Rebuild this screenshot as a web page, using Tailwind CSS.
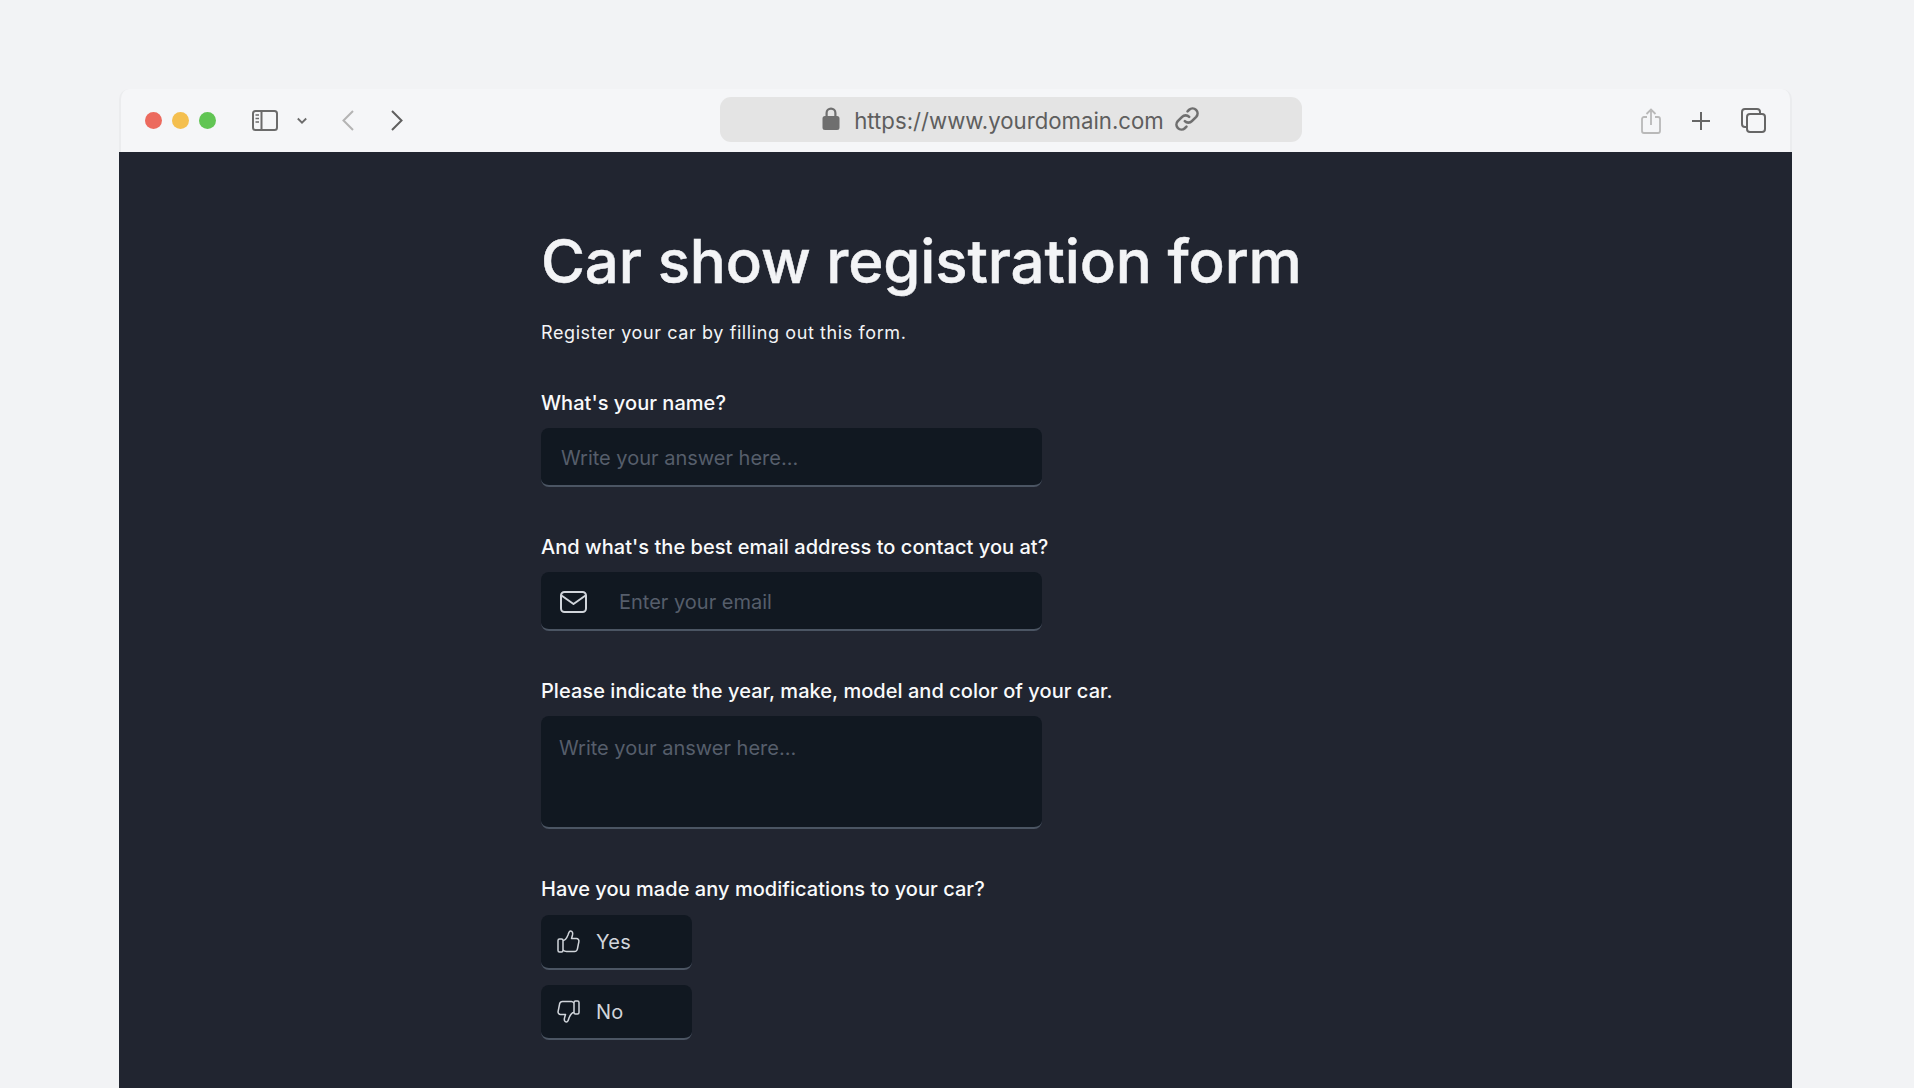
<!DOCTYPE html>
<html lang="en">
<head>
    <meta charset="UTF-8">
    <title>Car show registration form</title>
    <script src="https://cdn.jsdelivr.net/npm/@tailwindcss/browser@4"></script>
</head>
<body class="h-[1088px] overflow-hidden bg-[#f2f3f5] font-['Inter',sans-serif]">
    <div class="pt-[89px] pl-[119px] w-[1792px] h-[1088px] flex flex-col">
        <!-- Browser toolbar -->
        <div class="h-[63px] shrink-0 bg-[#f5f6f8] border-x-2 border-[#ebecee] rounded-t-[10px] flex items-center relative">
            <div class="flex items-center gap-[10px] ml-[24px]">
                <span class="w-[17px] h-[17px] rounded-full bg-[#ec6a5e]"></span>
                <span class="w-[17px] h-[17px] rounded-full bg-[#f4bf4f]"></span>
                <span class="w-[17px] h-[17px] rounded-full bg-[#61c554]"></span>
            </div>
            <svg class="ml-[36px]" width="26" height="21" viewBox="0 0 26 21" fill="none" stroke="#6b6b6b" stroke-width="2">
                <rect x="1" y="1" width="24" height="19" rx="2.5"/>
                <path d="M9.500 1v19"/>
                <path d="M3.500 5h3.500M3.500 8.500h3.500M3.500 12h3.500" stroke-width="1.600"/>
            </svg>
            <svg class="ml-[19px]" width="10" height="8" viewBox="0 0 10 8" fill="none" stroke="#6b6b6b" stroke-width="1.800">
                <path d="M.8 1.500l4.200 4.200 4.200-4.200"/>
            </svg>
            <svg class="ml-[35px]" width="12" height="21" viewBox="0 0 12 21" fill="none" stroke="#b4b4b4" stroke-width="2">
                <path d="M11 1L1.500 10.500 11 20"/>
            </svg>
            <svg class="ml-[37px]" width="12" height="21" viewBox="0 0 12 21" fill="none" stroke="#5f5f5f" stroke-width="2">
                <path d="M1 1l9.500 9.500L1 20"/>
            </svg>
            <!-- Address bar -->
            <div class="absolute left-[599px] top-[8px] w-[582px] h-[45px] rounded-[11px] bg-[#e4e4e4] flex items-center justify-center text-[#5e5e5e] text-[22.2px] pt-[3px]">
                <svg class="mr-[14px] mb-[6px]" width="18" height="23" viewBox="0 0 17 23" fill="#6f6f6f">
                    <path fill-rule="evenodd" d="M3 9V6a5.500 5.500 0 0 1 11 0v3h.5A2.500 2.500 0 0 1 17 11.500v9a2.500 2.500 0 0 1-2.500 2.500h-12A2.500 2.500 0 0 1 0 20.500v-9A2.500 2.500 0 0 1 2.500 9zm2.200 0h6.600V6a3.300 3.300 0 0 0-6.600 0z"/>
                </svg>
                <span>https://www.yourdomain.com</span>
                <svg class="ml-[10px] mb-[4px]" width="26" height="26" viewBox="0 0 24 24" fill="none" stroke="#6f6f6f" stroke-width="2.400" stroke-linecap="round">
                    <path d="M10 14a4.500 4.500 0 0 0 6.500 0l4-4a4.600 4.600 0 0 0-6.500-6.500l-1.500 1.500"/>
                    <path d="M14 10a4.500 4.500 0 0 0-6.500 0l-4 4a4.600 4.600 0 0 0 6.500 6.500l1.500-1.500"/>
                </svg>
            </div>
            <!-- Right icons -->
            <div class="ml-auto flex items-center mr-[24px]">
                <svg width="20" height="26" viewBox="0 0 20 26" fill="none" stroke="#b9b9b9" stroke-width="1.800">
                    <path d="M6 9H3a2 2 0 0 0-2 2v12a2 2 0 0 0 2 2h14a2 2 0 0 0 2-2V11a2 2 0 0 0-2-2h-3"/>
                    <path d="M10 17V2M5.500 6L10 1.500 14.500 6"/>
                </svg>
                <svg class="ml-[30px]" width="20" height="20" viewBox="0 0 20 20" fill="none" stroke="#666" stroke-width="2">
                    <path d="M10 1v18M1 10h18"/>
                </svg>
                <svg class="ml-[30px]" width="25" height="25" viewBox="0 0 25 25" fill="none" stroke="#666" stroke-width="2">
                    <path d="M5 19H4a3 3 0 0 1-3-3V4a3 3 0 0 1 3-3h12a3 3 0 0 1 3 3v2"/>
                    <rect x="6" y="6" width="18" height="18" rx="3"/>
                </svg>
            </div>
        </div>

        <!-- Form page -->
        <div class="flex-1 bg-[#212530] pl-[422px]">
            <h1 class="mt-[65px] text-[60px] leading-[88px] font-medium text-[#f3f4f6] tracking-[-0.15px] [-webkit-text-stroke:0.5px_#f3f4f6]">Car show registration form</h1>
            <p class="mt-[14px] text-[18px] leading-[28px] text-[#f3f4f6] tracking-[0.6px]">Register your car by filling out this form.</p>

            <label class="block mt-[42px] text-[20px] leading-[28px] font-medium text-[#f9fafb] tracking-[0.04px]">What's your name?</label>
            <div class="mt-[11px] w-[501px] h-[59px] rounded-[8px] bg-[#111821] border-b-2 border-[#4b5563] flex items-center pl-[20px] pt-[2px] text-[20px] text-[#565e6b]">Write your answer here...</div>

            <label class="block mt-[46px] text-[20px] leading-[28px] font-medium text-[#f9fafb] tracking-[0.04px]">And what's the best email address to contact you at?</label>
            <div class="mt-[11px] w-[501px] h-[59px] rounded-[8px] bg-[#111821] border-b-2 border-[#4b5563] flex items-center pl-[19px] pt-[2px] text-[20px] text-[#565e6b]">
                <svg width="27" height="22" viewBox="0 0 27 22" fill="none" stroke="#d1d5db" stroke-width="2" stroke-linejoin="round">
                    <rect x="1" y="1" width="25" height="20" rx="3.500"/>
                    <path d="M1.500 4.500L13.500 13 25.500 4.500"/>
                </svg>
                <span class="ml-[32px]">Enter your email</span>
            </div>

            <label class="block mt-[46px] text-[20px] leading-[28px] font-medium text-[#f9fafb] tracking-[0.04px]">Please indicate the year, make, model and color of your car.</label>
            <div class="mt-[11px] w-[501px] h-[113px] rounded-[8px] bg-[#111821] border-b-2 border-[#4b5563] pl-[18px] pt-[18px] text-[20px] leading-[28px] text-[#565e6b]">Write your answer here...</div>

            <label class="block mt-[46px] text-[20px] leading-[28px] font-medium text-[#f9fafb] tracking-[0.04px]">Have you made any modifications to your car?</label>
            <div class="mt-[12px] flex flex-col gap-[15px]">
                <div class="w-[151px] h-[55px] rounded-[8px] bg-[#111821] border-b-2 border-[#4b5563] flex items-center pl-[16px] text-[20px] text-[#d1d5db] tracking-[0.3px]">
                    <svg width="23" height="23" viewBox="0 0 23 23" fill="none" stroke="#d1d5db" stroke-width="1.500" stroke-linejoin="round">
                        <rect x="1" y="9" width="5" height="13" rx="1.500"/>
                        <path d="M6 10.500c2 0 4-3 5-5.500.5-1.500 1-4 2.500-4 2 0 2.500 2 2 4l-1 3.500h5a2.500 2.500 0 0 1 2.400 3l-1.500 7.500a3 3 0 0 1-3 2.500H9.500C8 21.500 7 21 6 20"/>
                    </svg>
                    <span class="ml-[16px]">Yes</span>
                </div>
                <div class="w-[151px] h-[55px] rounded-[8px] bg-[#111821] border-b-2 border-[#4b5563] flex items-center pl-[16px] text-[20px] text-[#d1d5db] tracking-[0.3px]">
                    <svg width="23" height="23" viewBox="0 0 23 23" fill="none" stroke="#d1d5db" stroke-width="1.500" stroke-linejoin="round">
                        <rect x="17" y="1" width="5" height="13" rx="1.500"/>
                        <path d="M17 12.500c-2 0-4 3-5 5.500-.5 1.500-1 4-2.500 4-2 0-2.500-2-2-4l1-3.500h-5a2.500 2.500 0 0 1-2.400-3l1.500-7.500a3 3 0 0 1 3-2.500h8.900C15 1.500 16 2 17 3"/>
                    </svg>
                    <span class="ml-[16px]">No</span>
                </div>
            </div>
        </div>
    </div>
</body>
</html>
